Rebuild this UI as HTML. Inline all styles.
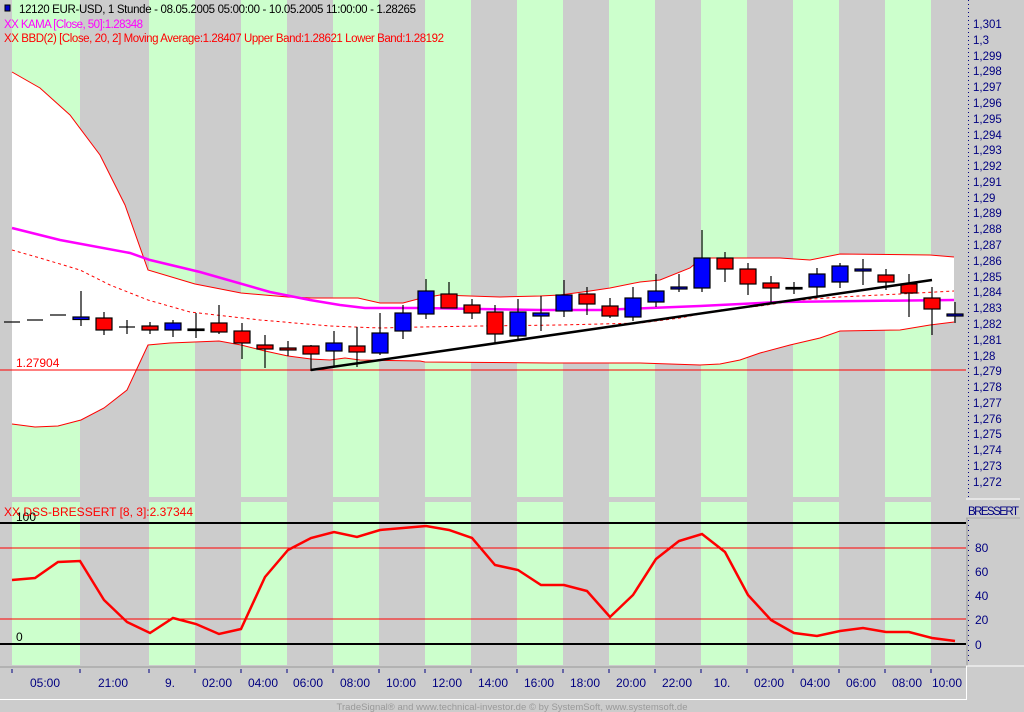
<!DOCTYPE html>
<html><head><meta charset="utf-8"><style>
html,body{margin:0;padding:0;background:#cccccc;}
svg{display:block;font-family:"Liberation Sans",sans-serif;}
</style></head><body>
<svg width="1024" height="712" viewBox="0 0 1024 712" xmlns="http://www.w3.org/2000/svg">
<rect x="0" y="0" width="1024" height="712" fill="#cccccc"/>
<g fill="#ccffcc">
<rect x="12" y="0" width="68" height="497"/><rect x="149" y="0" width="46" height="497"/>
<rect x="241" y="0" width="46" height="497"/><rect x="333" y="0" width="46" height="497"/>
<rect x="425" y="0" width="46" height="497"/><rect x="517" y="0" width="46" height="497"/>
<rect x="609" y="0" width="46" height="497"/><rect x="701" y="0" width="46" height="497"/>
<rect x="793" y="0" width="46" height="497"/><rect x="885" y="0" width="46" height="497"/>
<rect x="12" y="502" width="68" height="163"/><rect x="149" y="502" width="46" height="163"/>
<rect x="241" y="502" width="46" height="163"/><rect x="333" y="502" width="46" height="163"/>
<rect x="425" y="502" width="46" height="163"/><rect x="517" y="502" width="46" height="163"/>
<rect x="609" y="502" width="46" height="163"/><rect x="701" y="502" width="46" height="163"/>
<rect x="793" y="502" width="46" height="163"/><rect x="885" y="502" width="46" height="163"/>
</g>
<polygon fill="#ffffff" points="12,72 40,88 70,115 100,155 125,205 148,270 195,284 241,293 288,297 311,298 358,298 380,303 403,303 418,299 440,295 470,296 500,297 540,296 560,295 590,291 610,288 640,282 660,280 690,268 702,258 780,258 810,260 840,254 930,255 954,257 954,322 930,325 900,330 840,331 820,338 790,345 760,353 740,360 720,364 700,365 640,363 550,363 425,362 420,361 360,360 345,358 330,360 311,359 288,356 265,351 241,345 219,341 170,343 148,345 127,390 104,408 81,420 58,426 35,427 12,424"/>
<polyline fill="none" stroke="#ff0000" stroke-width="1" points="12,72 40,88 70,115 100,155 125,205 148,270 195,284 241,293 288,297 311,298 358,298 380,303 403,303 418,299 440,295 470,296 500,297 540,296 560,295 590,291 610,288 640,282 660,280 690,268 702,258 780,258 810,260 840,254 930,255 954,257"/>
<polyline fill="none" stroke="#ff0000" stroke-width="1" points="12,424 35,427 58,426 81,420 104,408 127,390 148,345 170,343 219,341 241,345 265,351 288,356 311,359 330,360 345,358 360,360 420,361 425,362 550,363 640,363 700,365 720,364 740,360 760,353 790,345 820,338 840,331 900,330 930,325 954,322"/>
<polyline fill="none" stroke="#ff0000" stroke-width="1" stroke-dasharray="3,3" points="12,250 40,258 80,270 110,285 148,300 190,312 260,320 330,326 380,328 420,327 480,326 560,325 640,323 680,318 720,310 760,306 800,300 840,297 900,294 954,291"/>
<line x1="0" y1="370" x2="966" y2="370" stroke="#ff0000" stroke-width="1"/>
<text x="16" y="367" font-size="12" fill="#ff0000">1.27904</text>
<polyline fill="none" stroke="#ff00ff" stroke-width="2.5" points="12,228 60,240 130,253 150,260 200,272 270,292 310,300 340,305 365,308 420,308 480,309 540,310 600,310 650,308 700,306 720,305 780,302 860,301 954,300"/>
<g stroke="#000" stroke-width="1.2">
<line x1="4" y1="322" x2="20" y2="322"/>
<line x1="27" y1="320" x2="43" y2="320"/>
<line x1="50" y1="315" x2="66" y2="315"/>
<line x1="81" y1="291" x2="81" y2="326"/><rect x="73" y="317" width="16" height="2.5" fill="#0000ff"/>
<line x1="104" y1="312" x2="104" y2="335"/><rect x="96" y="318" width="16" height="12" fill="#ff0000"/>
<line x1="127" y1="320" x2="127" y2="334"/><line x1="119" y1="327" x2="135" y2="327"/>
<line x1="150" y1="322" x2="150" y2="334"/><rect x="142" y="326" width="16" height="4" fill="#ff0000"/>
<line x1="173" y1="320" x2="173" y2="337"/><rect x="165" y="323" width="16" height="7" fill="#0000ff"/>
<line x1="196" y1="313" x2="196" y2="338"/><rect x="188" y="329" width="16" height="1.5" fill="#000"/>
<line x1="219" y1="305" x2="219" y2="334"/><rect x="211" y="323" width="16" height="9" fill="#ff0000"/>
<line x1="242" y1="323" x2="242" y2="359"/><rect x="234" y="331" width="16" height="12" fill="#ff0000"/>
<line x1="265" y1="335" x2="265" y2="368"/><rect x="257" y="345" width="16" height="4" fill="#ff0000"/>
<line x1="288" y1="341" x2="288" y2="356"/><rect x="280" y="348" width="16" height="2" fill="#ff0000"/>
<line x1="311" y1="345" x2="311" y2="371"/><rect x="303" y="346" width="16" height="8" fill="#ff0000"/>
<line x1="334" y1="331" x2="334" y2="367"/><rect x="326" y="343" width="16" height="8" fill="#0000ff"/>
<line x1="357" y1="327" x2="357" y2="367"/><rect x="349" y="346" width="16" height="6" fill="#ff0000"/>
<line x1="380" y1="313" x2="380" y2="355"/><rect x="372" y="333" width="16" height="20" fill="#0000ff"/>
<line x1="403" y1="305" x2="403" y2="339"/><rect x="395" y="313" width="16" height="18" fill="#0000ff"/>
<line x1="426" y1="279" x2="426" y2="319"/><rect x="418" y="291" width="16" height="23" fill="#0000ff"/>
<line x1="449" y1="282" x2="449" y2="308"/><rect x="441" y="294" width="16" height="14" fill="#ff0000"/>
<line x1="472" y1="299" x2="472" y2="319"/><rect x="464" y="305" width="16" height="8" fill="#ff0000"/>
<line x1="495" y1="305" x2="495" y2="343"/><rect x="487" y="312" width="16" height="22" fill="#ff0000"/>
<line x1="518" y1="299" x2="518" y2="340"/><rect x="510" y="312" width="16" height="24" fill="#0000ff"/>
<line x1="541" y1="296" x2="541" y2="331"/><rect x="533" y="313" width="16" height="3" fill="#0000ff"/>
<line x1="564" y1="280" x2="564" y2="317"/><rect x="556" y="295" width="16" height="16" fill="#0000ff"/>
<line x1="587" y1="287" x2="587" y2="315"/><rect x="579" y="294" width="16" height="10" fill="#ff0000"/>
<line x1="610" y1="298" x2="610" y2="318"/><rect x="602" y="306" width="16" height="10" fill="#ff0000"/>
<line x1="633" y1="287" x2="633" y2="321"/><rect x="625" y="298" width="16" height="19" fill="#0000ff"/>
<line x1="656" y1="274" x2="656" y2="307"/><rect x="648" y="291" width="16" height="11" fill="#0000ff"/>
<line x1="679" y1="274" x2="679" y2="292"/><rect x="671" y="287" width="16" height="2" fill="#0000ff"/>
<line x1="702" y1="230" x2="702" y2="292"/><rect x="694" y="258" width="16" height="30" fill="#0000ff"/>
<line x1="725" y1="252" x2="725" y2="282"/><rect x="717" y="258" width="16" height="11" fill="#ff0000"/>
<line x1="748" y1="263" x2="748" y2="295"/><rect x="740" y="269" width="16" height="15" fill="#ff0000"/>
<line x1="771" y1="276" x2="771" y2="303"/><rect x="763" y="283" width="16" height="5" fill="#ff0000"/>
<line x1="794" y1="282" x2="794" y2="294"/><rect x="786" y="287.5" width="16" height="1.5" fill="#000"/>
<line x1="817" y1="268" x2="817" y2="296"/><rect x="809" y="274" width="16" height="13" fill="#0000ff"/>
<line x1="840" y1="263" x2="840" y2="288"/><rect x="832" y="266" width="16" height="16" fill="#0000ff"/>
<line x1="863" y1="259" x2="863" y2="285"/><rect x="855" y="269" width="16" height="2" fill="#0000ff"/>
<line x1="886" y1="269" x2="886" y2="290"/><rect x="878" y="275" width="16" height="7" fill="#ff0000"/>
<line x1="909" y1="274" x2="909" y2="317"/><rect x="901" y="284" width="16" height="9" fill="#ff0000"/>
<line x1="932" y1="287" x2="932" y2="335"/><rect x="924" y="298" width="16" height="11" fill="#ff0000"/>
<line x1="955" y1="302" x2="955" y2="323"/><rect x="947" y="314" width="16" height="2" fill="#0000ff"/>
</g>
<line x1="311" y1="370" x2="932" y2="280" stroke="#000" stroke-width="2.5"/>
<rect x="5" y="5" width="5" height="6" fill="#0000cc" stroke="#000" stroke-width="1"/>
<text x="19" y="13" font-size="11.5" fill="#000" textLength="397">12120  EUR-USD, 1 Stunde - 08.05.2005 05:00:00 - 10.05.2005 11:00:00 - 1.28265</text>
<text x="4" y="28" font-size="11.5" fill="#ff00ff" textLength="139">XX KAMA [Close, 50]:1.28348</text>
<text x="4" y="42" font-size="11.5" fill="#ff0000" textLength="440">XX BBD(2) [Close, 20, 2] Moving Average:1.28407 Upper Band:1.28621 Lower Band:1.28192</text>
<line x1="968.5" y1="0" x2="968.5" y2="497" stroke="#000080" stroke-width="1" stroke-dasharray="1,3"/>
<g font-size="11.5" fill="#000080">
<text x="973" y="28">1,301</text><text x="973" y="44">1,3</text><text x="973" y="60">1,299</text><text x="973" y="75">1,298</text><text x="973" y="91">1,297</text><text x="973" y="107">1,296</text><text x="973" y="123">1,295</text><text x="973" y="139">1,294</text><text x="973" y="154">1,293</text><text x="973" y="170">1,292</text><text x="973" y="186">1,291</text><text x="973" y="202">1,29</text><text x="973" y="217">1,289</text><text x="973" y="233">1,288</text><text x="973" y="249">1,287</text><text x="973" y="265">1,286</text><text x="973" y="281">1,285</text><text x="973" y="296">1,284</text><text x="973" y="312">1,283</text><text x="973" y="328">1,282</text><text x="973" y="344">1,281</text><text x="973" y="360">1,28</text><text x="973" y="375">1,279</text><text x="973" y="391">1,278</text><text x="973" y="407">1,277</text><text x="973" y="423">1,276</text><text x="973" y="438">1,275</text><text x="973" y="454">1,274</text><text x="973" y="470">1,273</text><text x="973" y="486">1,272</text>
</g>
<line x1="0" y1="548" x2="966" y2="548" stroke="#ff0000" stroke-width="1"/>
<line x1="0" y1="619" x2="966" y2="619" stroke="#ff0000" stroke-width="1"/>
<line x1="0" y1="523" x2="966" y2="523" stroke="#000" stroke-width="2"/>
<line x1="0" y1="644" x2="966" y2="644" stroke="#000" stroke-width="2"/>
<text x="16" y="521" font-size="12" fill="#000">100</text>
<text x="16" y="641" font-size="12" fill="#000">0</text>
<text x="4" y="516" font-size="12" fill="#ff0000">XX DSS-BRESSERT [8, 3]:2.37344</text>
<polyline fill="none" stroke="#ff0000" stroke-width="2.5" points="12,580 35,578 58,562 80,561 104,600 127,622 150,633 173,618 196,624 219,634 241,629 265,577 288,550 311,538 334,532 357,537 380,530 403,528 426,526 449,530 472,538 495,565 518,570 541,585 564,585 587,591 610,617 633,595 656,559 679,541 702,534 725,552 748,595 771,620 794,633 817,636 840,631 863,628 886,632 909,632 932,638 955,641"/>
<line x1="966" y1="499" x2="1020" y2="499" stroke="#fff" stroke-width="1"/>
<text x="968" y="515" font-size="11.5" fill="#000080" textLength="51">BRESSERT</text>
<line x1="966" y1="518" x2="1020" y2="518" stroke="#aaa" stroke-width="1"/>
<line x1="967" y1="518" x2="967" y2="666" stroke="#999" stroke-width="1"/>
<line x1="968.5" y1="520" x2="968.5" y2="665" stroke="#000080" stroke-width="1" stroke-dasharray="1,4"/>
<line x1="966" y1="666" x2="1024" y2="666" stroke="#fff" stroke-width="1"/>
<g font-size="12" fill="#000080">
<text x="975" y="552">80</text><text x="975" y="576">60</text><text x="975" y="600">40</text><text x="975" y="624">20</text><text x="975" y="649">0</text>
</g>
<line x1="0" y1="667" x2="966" y2="667" stroke="#999" stroke-width="1"/>
<g stroke="#000080" stroke-width="1">
<line x1="12" y1="669" x2="12" y2="673"/><line x1="80" y1="669" x2="80" y2="673"/><line x1="149" y1="669" x2="149" y2="673"/><line x1="195" y1="669" x2="195" y2="673"/><line x1="241" y1="669" x2="241" y2="673"/><line x1="287" y1="669" x2="287" y2="673"/><line x1="333" y1="669" x2="333" y2="673"/><line x1="379" y1="669" x2="379" y2="673"/><line x1="425" y1="669" x2="425" y2="673"/><line x1="471" y1="669" x2="471" y2="673"/><line x1="517" y1="669" x2="517" y2="673"/><line x1="563" y1="669" x2="563" y2="673"/><line x1="609" y1="669" x2="609" y2="673"/><line x1="655" y1="669" x2="655" y2="673"/><line x1="701" y1="669" x2="701" y2="673"/><line x1="747" y1="669" x2="747" y2="673"/><line x1="793" y1="669" x2="793" y2="673"/><line x1="839" y1="669" x2="839" y2="673"/><line x1="885" y1="669" x2="885" y2="673"/><line x1="931" y1="669" x2="931" y2="673"/>
</g>
<g font-size="12" fill="#000080" text-anchor="middle">
<text x="45" y="687">05:00</text><text x="113" y="687">21:00</text><text x="170" y="687">9.</text><text x="217" y="687">02:00</text><text x="263" y="687">04:00</text><text x="308" y="687">06:00</text><text x="355" y="687">08:00</text><text x="401" y="687">10:00</text><text x="447" y="687">12:00</text><text x="493" y="687">14:00</text><text x="539" y="687">16:00</text><text x="585" y="687">18:00</text><text x="631" y="687">20:00</text><text x="677" y="687">22:00</text><text x="722" y="687">10.</text><text x="769" y="687">02:00</text><text x="815" y="687">04:00</text><text x="861" y="687">06:00</text><text x="907" y="687">08:00</text><text x="947" y="687">10:00</text>
</g>
<line x1="0" y1="699.5" x2="966" y2="699.5" stroke="#fff" stroke-width="1"/>
<line x1="966.5" y1="666" x2="966.5" y2="700" stroke="#fff" stroke-width="1"/>
<text x="512" y="710" font-size="9.5" fill="#999" text-anchor="middle" textLength="351">TradeSignal® and www.technical-investor.de © by  SystemSoft, www.systemsoft.de</text>
</svg>
</body></html>
